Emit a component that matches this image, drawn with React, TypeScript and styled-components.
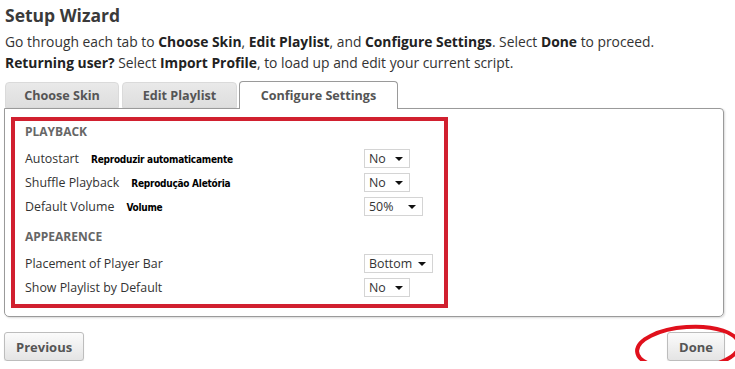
import React from "react";
import styled, { createGlobalStyle } from "styled-components";

const Global = createGlobalStyle`
  html, body { margin: 0; padding: 0; background: #fff; }
  body { font-family: "Open Sans", "Noto Sans", sans-serif; color: #333; }
`;

const Page = styled.div`
  width: 720px;
  padding: 3px 0 0 4px;
  position: relative;
`;

const Title = styled.h1`
  margin: 0 0 0 1px;
  font-size: 17.5px;
  line-height: 24px;
  font-weight: 700;
  color: #3a3a3a;
`;

const Intro = styled.p`
  margin: 4px 0 0 1px;
  font-size: 13.85px;
  line-height: 21px;
  color: #333;
  b { font-weight: 700; color: #222; }
`;

const Tabs = styled.div`
  display: flex;
  align-items: flex-end;
  margin-top: 8px;
  padding-left: 1px;
  position: relative;
  z-index: 1;
`;

const Tab = styled.div<{ $active?: boolean; $w: number; $gap?: number }>`
  box-sizing: border-box;
  width: ${(p) => p.$w}px;
  margin-left: ${(p) => p.$gap ?? 0}px;
  height: ${(p) => (p.$active ? 28 : 26)}px;
  margin-bottom: ${(p) => (p.$active ? -1 : 0)}px;
  display: flex;
  align-items: center;
  justify-content: center;
  font-size: 12.6px;
  font-weight: 700;
  color: #555;
  border-radius: 4px 4px 0 0;
  background: ${(p) => (p.$active ? "#fff" : "linear-gradient(#e9e9e9, #dedede)")};
  border: 1px solid ${(p) => (p.$active ? "#9a9a9a" : "#dadada")};
  border-bottom: ${(p) => (p.$active ? "none" : "1px solid #dadada")};
`;

const Panel = styled.div`
  box-sizing: border-box;
  width: 720px;
  border: 1px solid #9a9a9a;
  border-radius: 0 4px 5px 5px;
  box-shadow: 1px 1px 2px rgba(0, 0, 0, 0.15);
  padding: 8px 6px 8px 6px;
`;

const Highlight = styled.div`
  box-sizing: border-box;
  width: 437px;
  border: 4px solid #d1202f;
  padding: 1px 0 5px 10px;
`;

const SectionHeader = styled.div<{ $gap?: number }>`
  font-size: 12px;
  font-weight: 700;
  color: #666;
  line-height: 20px;
  margin-top: ${(p) => p.$gap ?? 0}px;
  margin-bottom: 4px;
`;

const Row = styled.div`
  display: grid;
  grid-template-columns: 339px auto;
  align-items: center;
  height: 24px;
`;

const Label = styled.div`
  font-size: 12.4px;
  color: #333;
  display: flex;
  align-items: baseline;
  white-space: nowrap;
`;

const Note = styled.span`
  margin-left: 12px;
  font-family: "DejaVu Sans Condensed", "DejaVu Sans", sans-serif;
  font-stretch: condensed;
  font-size: 10px;
  font-weight: 700;
  color: #000;
  letter-spacing: -0.25px;
`;

const Select = styled.div<{ $w: number }>`
  box-sizing: border-box;
  width: ${(p) => p.$w}px;
  height: 19px;
  border: 1px solid #d4d4d4;
  background: #fff;
  display: flex;
  align-items: center;
  justify-content: space-between;
  padding: 0 6px 0 4px;
  font-size: 12.4px;
  color: #333;
`;

const Caret = styled.span`
  width: 0;
  height: 0;
  border-left: 4px solid transparent;
  border-right: 4px solid transparent;
  border-top: 4px solid #111;
  margin-top: 2px;
`;

const Footer = styled.div`
  width: 721px;
  display: flex;
  justify-content: space-between;
  margin-top: 15px;
`;

const Button = styled.button`
  box-sizing: border-box;
  height: 29px;
  padding: 0 11px;
  border: 1px solid #bdbdbd;
  border-radius: 3px;
  background: linear-gradient(#fbfbfb, #e4e4e4);
  box-shadow: 0 1px 1px rgba(0, 0, 0, 0.12);
  font-family: "Open Sans", sans-serif;
  font-size: 13px;
  font-weight: 700;
  color: #555;
`;

const DoneWrap = styled.div`
  position: relative;
`;

const Ring = styled.svg`
  position: absolute;
  left: -33px;
  top: -9px;
  width: 110px;
  height: 50px;
  overflow: visible;
  pointer-events: none;
`;

type Opt = { label: React.ReactNode; value: string; w: number };

const playback: Opt[] = [
  { label: <>Autostart<Note>Reproduzir automaticamente</Note></>, value: "No", w: 46 },
  { label: <>Shuffle Playback<Note>Reprodução Aletória</Note></>, value: "No", w: 46 },
  { label: <>Default Volume<Note>Volume</Note></>, value: "50%", w: 59 },
];

const appearance: Opt[] = [
  { label: "Placement of Player Bar", value: "Bottom", w: 69 },
  { label: "Show Playlist by Default", value: "No", w: 46 },
];

const renderRows = (opts: Opt[]) =>
  opts.map((o, i) => (
    <Row key={i}>
      <Label>{o.label}</Label>
      <Select $w={o.w}>
        <span>{o.value}</span>
        <Caret />
      </Select>
    </Row>
  ));

export default function App() {
  return (
    <>
      <Global />
      <Page>
        <Title>Setup Wizard</Title>
        <Intro>
          Go through each tab to <b>Choose Skin</b>, <b>Edit Playlist</b>, and <b>Configure Settings</b>. Select{" "}
          <b>Done</b> to proceed.
          <br />
          <b>Returning user?</b> Select <b>Import Profile</b>, to load up and edit your current script.
        </Intro>
        <Tabs>
          <Tab $w={114}>Choose Skin</Tab>
          <Tab $w={115} $gap={3}>Edit Playlist</Tab>
          <Tab $w={159} $gap={2} $active>Configure Settings</Tab>
        </Tabs>
        <Panel>
          <Highlight>
            <SectionHeader>PLAYBACK</SectionHeader>
            {renderRows(playback)}
            <SectionHeader $gap={9}>APPEARENCE</SectionHeader>
            {renderRows(appearance)}
          </Highlight>
        </Panel>
        <Footer>
          <Button>Previous</Button>
          <DoneWrap>
            <Button>Done</Button>
            <Ring viewBox="0 0 110 50">
              <ellipse cx="54" cy="25" rx="51" ry="21" fill="none" stroke="#e0101c" strokeWidth="4" transform="rotate(-4 54 25)" />
            </Ring>
          </DoneWrap>
        </Footer>
      </Page>
    </>
  );
}
